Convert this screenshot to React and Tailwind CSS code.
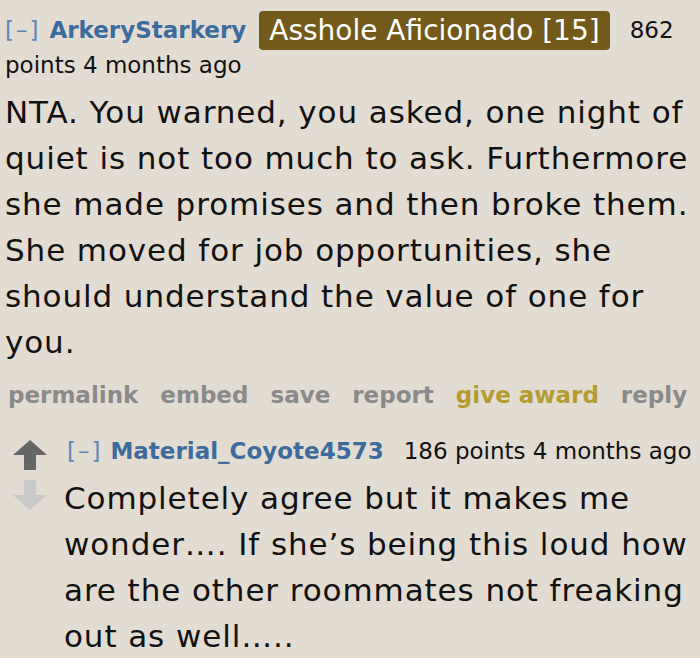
import React from 'react'

const sans = { fontFamily: '"DejaVu Sans", Verdana, sans-serif' }

function Arrow({ up, color }) {
  return (
    <svg width="34" height="30" viewBox="0 0 34 30" className="block">
      {up ? (
        <path d="M17 0 L34 15 L23 15 L23 30 L11 30 L11 15 L0 15 Z" fill={color} />
      ) : (
        <path d="M11 0 L23 0 L23 15 L34 15 L17 30 L0 15 L11 15 Z" fill={color} />
      )}
    </svg>
  )
}

export default function App() {
  return (
    <div className="h-[658px] w-[700px] overflow-hidden bg-[#e3dcd2] text-[#111]" style={sans}>
      <div className="px-[5px] pt-[10px]">
        <div className="flex h-[40px] items-center text-[23px]">
          <span className="tracking-[2px] text-[#5b87b8]">[–]</span>
          <span className="ml-[9px] font-bold text-[#3c6b9e]">ArkeryStarkery</span>
          <span className="ml-[13px] rounded-[4px] bg-[#735a1b] px-[10px] text-[28px] leading-[39px] text-white">
            Asshole Aficionado [15]
          </span>
          <span className="ml-[20px]">862</span>
        </div>
        <div className="text-[23px] leading-[30px]">points 4 months ago</div>
        <p className="mt-[9px] text-[31px] leading-[46px] tracking-[0.9px]">
          NTA. You warned, you asked, one night of quiet is not too much to ask. Furthermore she made promises and then broke them. She moved for job opportunities, she should understand the value of one for you.
        </p>
        <div className="mt-[10px] flex gap-[22px] pl-[3px] text-[23px] font-bold leading-[40px] text-[#8a8a8a]">
          <span>permalink</span>
          <span>embed</span>
          <span>save</span>
          <span>report</span>
          <span className="text-[#b49c30]">give award</span>
          <span>reply</span>
        </div>
      </div>
      <div className="mt-[18px] flex pl-[13px]">
        <div className="flex w-[51px] shrink-0 flex-col gap-[10px] pt-[7px]">
          <Arrow up color="#666666" />
          <Arrow color="#c9c9c9" />
        </div>
        <div className="min-w-0 flex-1">
          <div className="flex h-[36px] items-center text-[23px]">
            <span className="ml-[3px] tracking-[2px] text-[#5b87b8]">[–]</span>
            <span className="ml-[8px] font-bold text-[#3c6b9e]">Material_Coyote4573</span>
            <span className="ml-[20px] whitespace-nowrap">186 points 4 months ago</span>
          </div>
          <p className="mt-[6px] text-[31px] leading-[46px] tracking-[0.9px]">
            Completely agree but it makes me wonder…. If she’s being this loud how are the other roommates not freaking out as well…..
          </p>
        </div>
      </div>
    </div>
  )
}
